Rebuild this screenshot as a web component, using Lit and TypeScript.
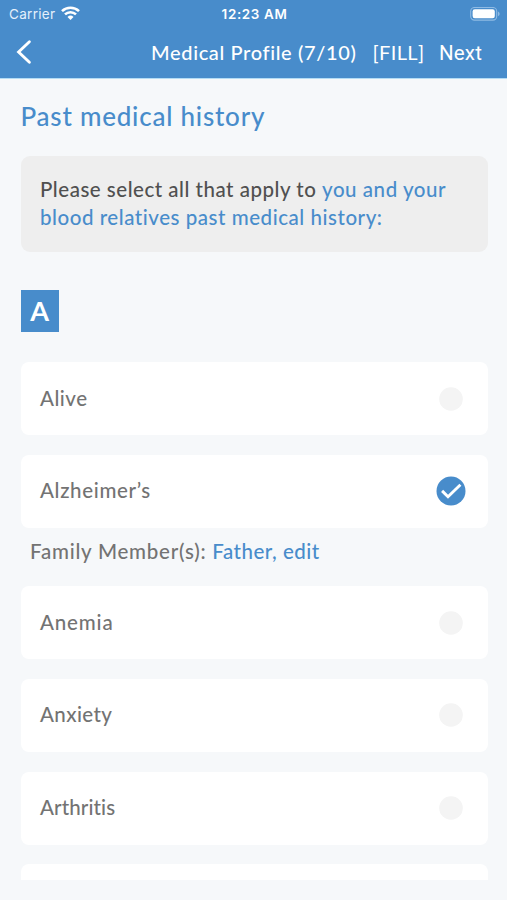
import { LitElement, html, css, svg, nothing } from "lit";
import { customElement, property } from "lit/decorators.js";

interface Condition {
  name: string;
  tracking: number;
  selected?: boolean;
  relatives?: string;
}

const CONDITIONS: Condition[] = [
  { name: "Alive", tracking: 0.5 },
  { name: "Alzheimer’s", tracking: 0.66, selected: true, relatives: "Father" },
  { name: "Anemia", tracking: 0.85 },
  { name: "Anxiety", tracking: 0.4 },
  { name: "Arthritis", tracking: 0.12 },
];

@customElement("status-bar")
class StatusBar extends LitElement {
  static styles = css`
    :host {
      display: grid;
      grid-template-columns: 1fr auto 1fr;
      align-items: center;
      height: 27px;
      padding: 0 7px 0 9px;
      color: #fff;
      font-family: Inter, "Liberation Sans", sans-serif;
      font-size: 13.5px;
      font-weight: 400;
      letter-spacing: 0.3px;
    }
    .carrier { display: flex; align-items: center; gap: 6px; color: #e4f0fb; }
    .carrier svg { margin-top: -2px; }
    .time { font-weight: 600; font-size: 13.4px; letter-spacing: 0.65px; }
    .battery { justify-self: end; }
    svg { display: block; }
  `;
  render() {
    return html`
      <div class="carrier">
        <span>Carrier</span>
        <svg width="19" height="14" viewBox="0 0 19 14" fill="none" stroke="#fff" stroke-width="2.6">
          <path d="M1 5.1a12.4 12.4 0 0 1 17 0" />
          <path d="M4 8.4a8 8 0 0 1 11 0" />
          <path d="M9.5 13.9 6.5 10.9a4.3 4.3 0 0 1 6 0Z" fill="#fff" stroke="none" />
        </svg>
      </div>
      <div class="time">12:23 AM</div>
      <svg class="battery" width="30" height="14" viewBox="0 0 30 14">
        <rect x="0.7" y="0.5" width="26" height="12.6" rx="3.8" fill="none" stroke="#8fbbe4" stroke-width="1.1" />
        <rect x="2.6" y="2.3" width="22.2" height="9" rx="2.2" fill="#fff" />
        <path d="M28.2 4.4c1.8.8 1.8 4 0 4.8Z" fill="#9fc5e8" />
      </svg>
    `;
  }
}

@customElement("nav-bar")
class NavBar extends LitElement {
  static styles = css`
    :host {
      display: flex;
      align-items: center;
      height: 50px;
      padding: 0 25px 0 16px;
      color: #fff;
      font-size: 20px;
      font-weight: 500;
      white-space: nowrap;
    }
    svg { display: block; }
    .title { margin-left: auto; letter-spacing: 0.63px; }
    .fill { margin-left: 16px; font-weight: 400; letter-spacing: 0.4px; }
    .next { margin-left: 14.5px; padding-top: 2px; font-weight: 400; font-size: 20.5px; font-family: Roboto, sans-serif; letter-spacing: 0.15px; }
  `;
  render() {
    return html`
      <svg width="17" height="26" viewBox="0 0 17 26" fill="none" stroke="#fff" stroke-width="2.9" stroke-linecap="round">
        <path d="M13.4 2.8 2.6 13l10.8 10.2" />
      </svg>
      <span class="title">Medical Profile (7/10)</span>
      <span class="fill">[FILL]</span>
      <span class="next">Next</span>
    `;
  }
}

@customElement("condition-card")
class ConditionCard extends LitElement {
  @property({ type: Boolean }) selected = false;
  @property({ type: Number }) tracking = 0.5;
  static styles = css`
    :host {
      display: flex;
      flex: none;
      align-items: center;
      justify-content: space-between;
      box-sizing: border-box;
      height: 73px;
      padding: 0 22px 0 19.5px;
      border-radius: 8px;
      background: #fff;
      color: #737373;
    }
    .name { padding-bottom: 2px; }
    .mark { display: block; }
  `;
  render() {
    return html`
      <span class="name" style="letter-spacing: ${this.tracking}px"><slot></slot></span>
      <svg class="mark" width="30" height="30" viewBox="0 0 30 30">
        ${this.selected
          ? svg`<circle cx="15" cy="15" r="14.5" fill="#488ccb" />
              <path d="M6.1 14.9 12 20.8 24.4 8.8" fill="none" stroke="#fff" stroke-width="2.9" />`
          : svg`<circle cx="15" cy="15" r="11.8" fill="#f4f4f4" />`}
      </svg>
    `;
  }
}

@customElement("app-root")
class AppRoot extends LitElement {
  static styles = css`
    :host {
      display: flex;
      flex-direction: column;
      box-sizing: border-box;
      height: 900px;
      padding-bottom: 20px;
      overflow: hidden;
      background: #f6f8fa;
      font-family: Lato, "Open Sans", sans-serif;
      font-size: 20.5px;
      font-weight: 500;
      letter-spacing: 0.5px;
      color: #737373;
    }
    header {
      flex: none;
      box-sizing: border-box;
      height: 79px;
      border-bottom: 1px solid #b4dcf5;
      background: #488ccb;
    }
    main {
      flex: 1;
      min-height: 0;
      overflow: hidden;
      padding: 19px 19.5px 0 20.5px;
    }
    h1 {
      margin: 0;
      font-size: 26px;
      line-height: 36px;
      font-weight: 500;
      color: #488ccb;
      letter-spacing: 0.77px;
    }
    .notice {
      box-sizing: border-box;
      height: 96px;
      margin-top: 21.7px;
      padding: 19px 19.5px;
      border-radius: 9px;
      background: #eee;
      color: #505050;
      line-height: 28px;
      letter-spacing: 0.51px;
      white-space: nowrap;
    }
    .accent { color: #488ccb; }
    .notice .accent { letter-spacing: 0.54px; }
    .letter {
      display: flex;
      align-items: center;
      justify-content: center;
      box-sizing: border-box;
      width: 38.5px;
      height: 42px;
      padding-bottom: 1px;
      margin-top: 38.7px;
      background: #488ccb;
      color: #fff;
      font-size: 27px;
      font-weight: 700;
      letter-spacing: 0;
    }
    .list {
      display: flex;
      flex-direction: column;
      gap: 19.7px;
      margin-top: 29.7px;
    }
    .family {
      height: 58.4px;
      margin: -19.7px 0;
      padding-left: 9.5px;
      line-height: 47px;
      letter-spacing: 0.77px;
    }
    .family .accent { letter-spacing: 0.5px; }
  `;
  render() {
    return html`
      <header>
        <status-bar></status-bar>
        <nav-bar></nav-bar>
      </header>
      <main>
        <h1>Past medical history</h1>
        <div class="notice">
          Please select all that apply to <span class="accent">you and your<br />blood relatives past medical history:</span>
        </div>
        <div class="letter">A</div>
        <div class="list">
          ${CONDITIONS.map(
            (c) => html`
              <condition-card ?selected=${c.selected} .tracking=${c.tracking}>${c.name}</condition-card>
              ${c.relatives
                ? html`<div class="family">Family Member(s): <span class="accent">${c.relatives}, edit</span></div>`
                : nothing}
            `
          )}
          <condition-card></condition-card>
        </div>
      </main>
    `;
  }
}
